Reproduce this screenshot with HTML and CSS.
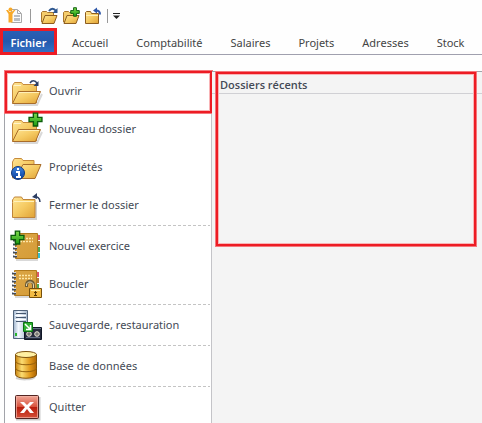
FILE: index.html
```html
<!DOCTYPE html>
<html lang="fr">
<head>
<meta charset="utf-8">
<title>Fichier</title>
<link rel="stylesheet" href="styles.css">
</head>
<body>
<svg class="defs" aria-hidden="true">
  <defs>
    <linearGradient id="gold" x1="0" y1="0" x2="1" y2="1"><stop offset="0" stop-color="#ffe595"/><stop offset=".5" stop-color="#f5ca62"/><stop offset="1" stop-color="#e0a236"/></linearGradient>
    <linearGradient id="book" x1="0" y1="0" x2="1" y2="1"><stop offset="0" stop-color="#dba545"/><stop offset="1" stop-color="#d59c38"/></linearGradient>
    <linearGradient id="green" x1="0" y1="0" x2="0" y2="1"><stop offset="0" stop-color="#7fdc4c"/><stop offset="1" stop-color="#1d9c14"/></linearGradient>
    <linearGradient id="blue" x1="0" y1="0" x2="0" y2="1"><stop offset="0" stop-color="#3d84e0"/><stop offset="1" stop-color="#0a3d9c"/></linearGradient>
    <linearGradient id="drum" x1="0" y1="0" x2="1" y2="0"><stop offset="0" stop-color="#c98410"/><stop offset=".3" stop-color="#fbdc72"/><stop offset=".7" stop-color="#e09618"/><stop offset="1" stop-color="#ad6504"/></linearGradient>
    <linearGradient id="red" x1="0" y1="0" x2="0" y2="1"><stop offset="0" stop-color="#f0a99a"/><stop offset=".48" stop-color="#d9543e"/><stop offset=".5" stop-color="#b81d0c"/><stop offset="1" stop-color="#d4503a"/></linearGradient>
    <linearGradient id="tower" x1="0" y1="0" x2="1" y2="0"><stop offset="0" stop-color="#9fb4cc"/><stop offset=".35" stop-color="#f4f9ff"/><stop offset="1" stop-color="#a4b6cc"/></linearGradient>
    <symbol id="folder-open" viewBox="0 0 32 32">
      <path d="M3 30h23l5-11" fill="none" stroke="#000" stroke-opacity=".15" stroke-width="2"/>
      <path d="M1.500 28V10.500l1-1.500 1-1.500h7l1.500 2h13.500v18.500z" fill="url(#gold)" stroke="#c68a3c"/>
      <path d="M3 10.500h7" stroke="#fff4cc"/>
      <path d="M1.500 28.500 7.500 16.500h22l-5 12z" fill="url(#gold)" stroke="#a86c2a"/>
      <path d="M8 17.500h20" stroke="#fff0b8"/>
    </symbol>
    <symbol id="plus" viewBox="0 0 14 14"><path d="M5 1h4v4h4v4H9v4H5V9H1V5h4z" fill="url(#green)" stroke="#0b5c0b" stroke-width="1.300"/></symbol>
    <symbol id="closed" viewBox="0 0 32 32">
      <path d="M3 30h22V13" fill="none" stroke="#000" stroke-opacity=".18" stroke-width="2"/>
      <path d="M1.500 28.500V11l1-1.500 1-1.500h7l1.500 2.500h12v18z" fill="url(#gold)" stroke="#bf843a"/>
      <path d="M2 13.500 3 12.500h20" fill="none" stroke="#fff1bd"/>
    </symbol>
    <symbol id="notebook" viewBox="0 0 32 32">
      <path d="M25 3h3v25h-3z" fill="#eee"/><path d="M26 4h3v5h-3z" fill="#d95769"/><path d="M26 10h3v5h-3z" fill="#b37c35"/><path d="M26 16h3v5h-3z" fill="#51a94f"/><path d="M26 22h3v5h-3z" fill="#32bdd0"/>
      <path d="M5 29h22" stroke="#555" stroke-opacity=".45"/>
      <path d="M4.500 2.500h22v25h-22z" fill="url(#book)" stroke="#b27a1c"/>
      <path d="M9 7.500h13M9 10.500h13" stroke="#ffe8a7" stroke-width="1.500" stroke-dasharray="2 1"/>
      <path d="M2 5.500h4M2 9.500h4M2 13.500h4M2 17.500h4M2 21.500h4M2 25.500h4" stroke="#444c59" stroke-width="2"/>
      <path d="M3 4.500h3M3 8.500h3M3 12.500h3M3 16.500h3M3 20.500h3M3 24.500h3" stroke="#d5dce6"/>
    </symbol>
  </defs>
</svg>

<header class="ribbon">
  <div class="quick">
    <svg class="app-logo" viewBox="0 0 18 18" aria-hidden="true">
      <path d="M5.500 2.500h6l4 4v9h-10z" fill="#fafafa" stroke="#a8a8a8"/><path d="M11.500 3v3.500H15" fill="none" stroke="#a8a8a8"/><path d="M8 8h6v2H8zM8 11h6v3H8z" fill="#b9bdc2"/>
      <circle cx="4.500" cy="2.500" r="2" fill="#f8a928"/><path d="M0 3h2l1.500 2h2L8 3h1.500L6.500 7v8.500h-4V7z" fill="#f8a928"/>
    </svg>
    <span class="bar"></span>
    <button class="tool" aria-label="Ouvrir"><svg viewBox="0 0 18 18">
      <path d="M1.500 15V5.500l1-1h4l1 1h6V15z" fill="#f5cd6c" stroke="#a9762d"/><path d="m2 16.500 3-8h12l-3 8z" fill="url(#gold)" stroke="#8d5d1f"/><path d="M9 4c2-3 5-3 7 0" fill="none" stroke="#2d568f" stroke-width="2"/><path d="M17.500 1v5h-5z" fill="#2d568f"/></svg></button>
    <button class="tool" aria-label="Nouveau dossier"><svg viewBox="0 0 18 18">
      <path d="M1.500 15V5.500l1-1h4l1 1h6V15z" fill="#f5cd6c" stroke="#a9762d"/><path d="m2 16.500 3-8h12l-3 8z" fill="url(#gold)" stroke="#8d5d1f"/><use href="#plus" x="8" y="0" width="10" height="10"/></svg></button>
    <button class="tool" aria-label="Fermer le dossier"><svg viewBox="0 0 18 18">
      <path d="M1.500 16.500v-11l1-1h4l1 2h7v10z" fill="url(#gold)" stroke="#8d5d1f"/><path d="M2 8.500h12" stroke="#fff0b8"/><path d="M12 3.500c3 0 4 1 4 4" fill="none" stroke="#2d56a8" stroke-width="2"/><path d="M9 3.500 13 .5v6z" fill="#2d56a8"/></svg></button>
    <span class="bar near"></span>
    <button class="more" aria-label="Personnaliser"><svg viewBox="0 0 7 6"><path d="M0 .5h7" stroke="#222"/><path d="M0 2.500h7L3.500 6z" fill="#222"/></svg></button>
  </div>
  <nav class="tabs">
    <button class="tab active">Fichier</button>
    <button class="tab">Accueil</button>
    <button class="tab">Comptabilité</button>
    <button class="tab">Salaires</button>
    <button class="tab">Projets</button>
    <button class="tab">Adresses</button>
    <button class="tab">Stock</button>
  </nav>
</header>

<main class="backstage">
  <nav class="menu">
    <button class="item marked"><svg viewBox="0 0 32 32"><use href="#folder-open" width="32" height="32"/><path d="M19 8c2-3 6-3 7 1" fill="none" stroke="#2c3e63" stroke-width="1.500"/><path d="M27.500 6v5h-5z" fill="#2c3e63"/></svg>Ouvrir</button>
    <button class="item"><svg viewBox="0 0 32 32"><use href="#folder-open" width="32" height="32"/><use href="#plus" x="17" y="-1" width="15" height="15"/></svg>Nouveau dossier</button>
    <button class="item"><svg viewBox="0 0 32 32"><g transform="translate(0 -1)"><path d="M1.500 28V12l1-2 1-1.500h7l1.500 2h11V28z" fill="url(#gold)" stroke="#c68a3c"/><path d="M4 28.500 12 14.500h18l-6 14z" fill="url(#gold)" stroke="#a86c2a"/></g>
      <circle cx="7" cy="22" r="6.500" fill="url(#blue)" stroke="#10377c"/><path d="M6 18h2M5 21h3v5M5 26h5" fill="none" stroke="#fff" stroke-width="2"/></svg>Propriétés</button>
    <button class="item"><svg viewBox="0 0 32 32"><use href="#closed" width="32" height="32"/><path d="M23 8c3-1 6 1 6 5" fill="none" stroke="#2c3e63" stroke-width="1.500"/><path d="M21 8l5-4v6z" fill="#2c3e63"/></svg>Fermer le dossier</button>
    <hr>
    <button class="item"><svg viewBox="0 0 32 32"><g transform="translate(0 1)"><use href="#notebook" width="32" height="32"/></g><use href="#plus" x="-1" y="0" width="15" height="15"/></svg>Nouvel exercice</button>
    <button class="item"><svg viewBox="0 0 32 32"><g transform="translate(-1 0)"><use href="#notebook" width="32" height="32"/></g>
      <path d="M15.500 19v-2c0-5 7-5 7 0v4" fill="none" stroke="#6b5a35" stroke-width="3"/><path d="M15.500 18v-1c0-4 7-4 7 0v4" fill="none" stroke="#e4d7ad"/><path d="M18.500 20.500h12v9h-12z" fill="#f2bb43" stroke="#76500c"/><path d="M20 22.500h9" stroke="#ffec9c"/><path d="M24.500 23v5M23 24.500h3M23 27.500h3" stroke="#5a3b06"/></svg>Boucler</button>
    <hr>
    <button class="item"><svg viewBox="0 0 32 32">
      <path d="M2.500 1.500h14v28h-14z" fill="url(#tower)" stroke="#52647b"/><path d="M5 4.500h10M5 8.500h10M5 12.500h10" stroke="#46576e"/><path d="M4 6.500h11M4 10.500h11" stroke="#fff"/><path d="M4 24h2v3H4z" fill="#28b52c"/>
      <path d="M13.500 18.500h17v12h-17z" fill="#262c3d" stroke="#101626"/><path d="M14 19.500h16" stroke="#667086"/><circle cx="18" cy="25" r="2.300" fill="#777" stroke="#ede8d7"/><circle cx="26" cy="25" r="2.300" fill="#777" stroke="#ede8d7"/><path d="M15 28.500h14" stroke="#657087"/>
      <path d="M12.500 13.500h9v9h-9z" fill="#2eaf30" stroke="#087312"/><path d="m14 15 5 5M19.500 16v4.500H15" fill="none" stroke="#fff" stroke-width="1.500"/></svg>Sauvegarde, restauration</button>
    <hr>
    <button class="item"><svg viewBox="0 0 32 32">
      <path d="M5 28c5 2 16 2 19-1" fill="none" stroke="#000" stroke-opacity=".18" stroke-width="2"/><path d="M4.500 4.500v20c0 5 21 5 21 0v-20z" fill="url(#drum)" stroke="#80520e"/><ellipse cx="15" cy="4.500" rx="10.500" ry="3" fill="#fff0a3" stroke="#80520e"/><path d="M4.500 11c0 5 21 5 21 0M4.500 18c0 5 21 5 21 0" fill="none" stroke="#94600c"/></svg>Base de données</button>
    <hr>
    <button class="item"><svg viewBox="0 0 32 32">
      <path d="M5 28.500h23.500V6" fill="none" stroke="#000" stroke-opacity=".2" stroke-width="2"/><rect x="4.500" y="4.500" width="23" height="23" rx="1" fill="url(#red)" stroke="#532522"/><path d="M5.500 26.500v-21h21v21z" fill="none" stroke="#f4b5a8" stroke-opacity=".7"/><path d="M9 11h4l3 3 3-3h4l-5 5 5 6h-4l-3-4-3 4H9l5-6z" fill="#fff"/></svg>Quitter</button>
  </nav>
  <section class="content">
    <div class="recent">
      <h2>Dossiers récents</h2>
    </div>
  </section>
</main>
</body>
</html>
```
FILE: styles.css
```css
*, *::after { box-sizing: border-box; }
body {
  margin: 0;
  height: 100vh;
  overflow: hidden;
  display: flex;
  flex-direction: column;
  background: #fefefe;
  color: #444a55;
  font: 11px/16px "Noto Sans", "Open Sans", sans-serif;
}
button {
  margin: 0;
  padding: 0;
  border: 0;
  background: none;
  color: inherit;
  font: inherit;
}
.defs { position: absolute; width: 0; height: 0; }

.ribbon { flex: none; height: 55px; border-bottom: 1px solid #a0a0ae; }
.quick { display: flex; align-items: center; height: 28px; padding: 4px 0 0 6px; }
.quick svg { display: block; }
.app-logo { width: 18px; height: 18px; }
.bar { width: 1px; height: 14px; margin: 0 9px 0 6px; background: #999; }
.bar.near { margin: 0 5px 0 1px; }
.tool { width: 18px; height: 18px; margin-right: 4px; }
.more { width: 7px; height: 6px; }
.tabs { display: flex; height: 27px; }
.tab { flex: none; padding: 3px 13px 0 15px; color: #444; white-space: nowrap; }
.tab.active {
  width: 57px;
  height: 27px;
  padding: 2px 0 0;
  border: 3px solid #ed1c24;
  background: linear-gradient(#2a5fb4, #2459ad 50%, #3470c4);
  color: #fff;
  font-weight: 600;
}

.backstage { flex: 1; display: flex; min-height: 0; padding-top: 16px; }
.menu {
  flex: none;
  width: 208px;
  margin-left: 4px;
  border: 1px solid #a2a4aa;
  border-right-color: #c4c4c8;
  border-bottom: 0;
  background: #fff;
}
.item {
  position: relative;
  display: flex;
  align-items: center;
  gap: 6px;
  width: 100%;
  height: 38px;
  padding-left: 6px;
  white-space: nowrap;
}
.item svg { flex: none; width: 32px; height: 32px; overflow: visible; }
.item.marked::after {
  content: "";
  position: absolute;
  inset: -1px -1px -3px 0;
  border: 2px solid #ed1c24;
  box-shadow: 0 0 0 1px #f4777c, inset 0 0 0 1px #f9b4b6;
}
.menu hr {
  height: 1px;
  margin: 1px 1px 1px 43px;
  border: 0;
  background: repeating-linear-gradient(90deg, #c4c4c4 0 3px, transparent 3px 5px);
}
.content {
  position: relative;
  flex: 1;
  border-top: 1px solid #a2a4aa;
  background: #f4f4f4;
}
.content h2 {
  margin: 0;
  padding: 5px 0 0 8px;
  border-bottom: 1px solid #d0d0d4;
  font: 600 11px/16px "Open Sans", sans-serif;
}
.recent::after {
  content: "";
  position: absolute;
  top: 0;
  left: 4px;
  right: 6px;
  height: 174px;
  border: 2px solid #ed1c24;
  box-shadow: 0 0 0 1px #f4777c, inset 0 0 0 1px #f9b4b6;
}
```
